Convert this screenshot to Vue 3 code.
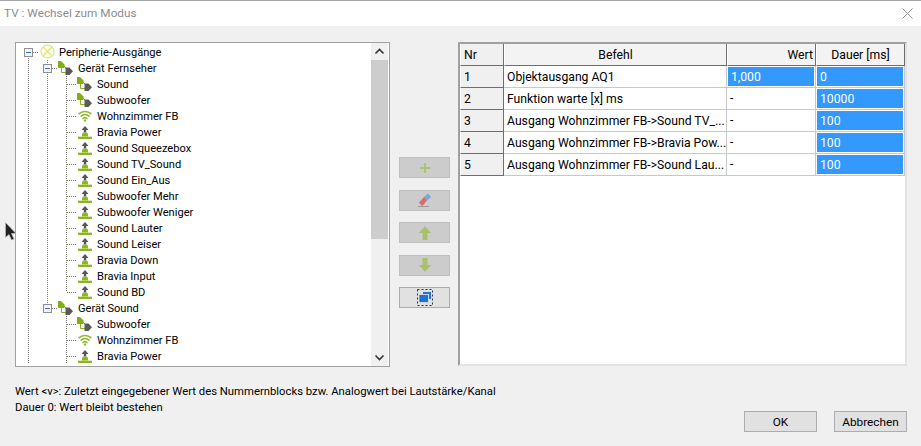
<script setup>
const leaf = (label, kind = 'up', last = false) => ({ label, kind, level: 2, last })
const rows = [
  { label: 'Peripherie-Ausgänge', kind: 'lamp', level: 0 },
  { label: 'Gerät Fernseher', kind: 'device', level: 1 },
  leaf('Sound', 'device'),
  leaf('Subwoofer', 'device'),
  leaf('Wohnzimmer FB', 'wifi'),
  leaf('Bravia Power'),
  leaf('Sound Squeezebox'),
  leaf('Sound TV_Sound'),
  leaf('Sound Ein_Aus'),
  leaf('Subwoofer Mehr'),
  leaf('Subwoofer Weniger'),
  leaf('Sound Lauter'),
  leaf('Sound Leiser'),
  leaf('Bravia Down'),
  leaf('Bravia Input'),
  leaf('Sound BD', 'up', true),
  { label: 'Gerät Sound', kind: 'device', level: 1, lastGroup: true },
  leaf('Subwoofer', 'device'),
  leaf('Wohnzimmer FB', 'wifi'),
  leaf('Bravia Power')
]
const commands = [
  { nr: 1, name: 'Objektausgang AQ1', value: '1,000', selected: true, time: '0' },
  { nr: 2, name: 'Funktion warte [x] ms', value: '-', time: '10000' },
  { nr: 3, name: 'Ausgang Wohnzimmer FB->Sound TV_...', value: '-', time: '100' },
  { nr: 4, name: 'Ausgang Wohnzimmer FB->Bravia Pow...', value: '-', time: '100' },
  { nr: 5, name: 'Ausgang Wohnzimmer FB->Sound Lau...', value: '-', time: '100' }
]
</script>

<template>
  <div class="dialog">
    <header class="titlebar">
      <span class="title">TV : Wechsel zum Modus</span>
      <svg class="close" width="11" height="11" viewBox="0 0 11 11"><path d="M.5.5l10 10M10.500.5l-10 10" stroke="#8f8f8f" fill="none" /></svg>
    </header>

    <main class="main">
      <section class="tree">
        <div class="tree-list">
          <div v-for="(row, i) in rows" :key="i" class="row">
            <template v-if="row.level === 0">
              <span class="cell cell-root"><i class="toggle"></i></span>
            </template>
            <template v-else-if="row.level === 1">
              <span class="cell cell-v"></span>
              <span class="cell" :class="row.lastGroup ? 'cell-groupend' : 'cell-group'"><i class="toggle"></i></span>
            </template>
            <template v-else>
              <span class="cell cell-v"></span>
              <span class="cell" :class="i > 16 ? '' : 'cell-v'"></span>
              <span class="cell" :class="row.last ? 'cell-ell' : 'cell-tee'"></span>
            </template>

            <svg class="icon" width="17" height="16" viewBox="0 0 17 16">
              <g v-if="row.kind === 'lamp'" fill="none" stroke="#e4e480" stroke-width="1.200">
                <circle cx="8.500" cy="7.500" r="6.500" fill="#fdfdf0" />
                <path d="M4 3l9 9M13 3l-9 9" />
              </g>
              <g v-else-if="row.kind === 'device'">
                <path d="M3.500 7v5.500H8M5 5l3 3" fill="none" stroke="#86b31f" />
                <path d="M0 1h3l3.500 3.500V8H0z" fill="#83ae12" />
                <path d="M7.500 7.500h4L15 11.250 11.500 15h-4z" fill="#5a5a5a" />
              </g>
              <g v-else-if="row.kind === 'wifi'" fill="none" stroke="#8db92b" stroke-width="1.600">
                <path d="M1.500 6Q8 1 14.500 6M3.500 8.500Q8 4.500 12.500 8.500M5.500 10.800Q8 8.800 10.500 10.800" />
                <circle cx="8" cy="12.500" r="1.200" fill="#8db92b" stroke="none" />
              </g>
              <g v-else>
                <path d="M8 2l3.500 4H9.200v2.500H6.800V6H4.500z" fill="#555" />
                <path d="M5 12.500V10.500q0-2 2-2h2q2 0 2 2v2z" fill="#8cb51f" />
                <path d="M1 12.700h14V15H1z" fill="#8cb51f" />
              </g>
            </svg>
            <span class="label">{{ row.label }}</span>
          </div>
        </div>
        <div class="scrollbar">
          <svg width="17" height="17" viewBox="0 0 17 17"><path d="M4.500 10.500l4-4 4 4" fill="none" stroke="#333" stroke-width="1.600" /></svg>
          <div class="thumb-track"><div class="thumb"></div></div>
          <svg width="17" height="17" viewBox="0 0 17 17"><path d="M4.500 6.500l4 4 4-4" fill="none" stroke="#333" stroke-width="1.600" /></svg>
        </div>
      </section>

      <div class="tools">
        <button class="tool" disabled>
          <svg width="12" height="12" viewBox="0 0 12 12"><path d="M5 1h2v4h4v2H7v4H5V7H1V5h4z" fill="#abc46d" /></svg>
        </button>
        <button class="tool" disabled>
          <svg width="16" height="16" viewBox="0 0 16 16">
            <path d="M7 5l4-3.500 3 3.500-4 3.500z" fill="#7aa7dc" />
            <path d="M7 5l3 3.500L6 13.500H4.500L2 10.500z" fill="#d96c6c" />
            <path d="M1 14.500h11" stroke="#9a9a9a" />
          </svg>
        </button>
        <button class="tool" disabled>
          <svg width="14" height="16" viewBox="0 0 14 16"><path d="M7 1l6 7h-3.500v7h-5V8H1z" fill="#a8c26c" /></svg>
        </button>
        <button class="tool" disabled>
          <svg width="14" height="16" viewBox="0 0 14 16"><path d="M7 15l6-7h-3.500V1h-5v7H1z" fill="#a8c26c" /></svg>
        </button>
        <button class="tool tool-on">
          <svg width="16" height="17" viewBox="0 0 16 17">
            <rect x=".5" y=".5" width="15" height="16" fill="none" stroke="#333" stroke-dasharray="2 2" />
            <path d="M6 3h8v7h-2V5H6z" fill="#1f72d6" />
            <path d="M2 5.500h9.500v8H2z" fill="#1f72d6" stroke="#e1e1e1" stroke-width=".8" />
          </svg>
        </button>
      </div>

      <section class="grid">
        <div class="grid-row">
          <div class="head nr">Nr</div>
          <div class="head center">Befehl</div>
          <div class="head right">Wert</div>
          <div class="head center">Dauer [ms]</div>
        </div>
        <div v-for="c in commands" :key="c.nr" class="grid-row">
          <div class="head nr side">{{ c.nr }}</div>
          <div class="data">{{ c.name }}</div>
          <div class="data" :class="{ picked: c.selected }"><b>{{ c.value }}</b></div>
          <div class="data picked"><b>{{ c.time }}</b></div>
        </div>
      </section>
    </main>

    <footer class="footer">
      <div class="note">
        <p>Wert &lt;v&gt;: Zuletzt eingegebener Wert des Nummernblocks bzw. Analogwert bei Lautstärke/Kanal</p>
        <p>Dauer 0: Wert bleibt bestehen</p>
      </div>
      <div class="actions">
        <button class="action">OK</button>
        <button class="action">Abbrechen</button>
      </div>
    </footer>

    <svg class="pointer" width="11" height="19" viewBox="0 0 11 19">
      <path d="M.5.5v15l3.500-3 2.500 5.500 2.500-1-2.500-5.500h4.500z" fill="#222" stroke="#bbb" stroke-width=".7" />
    </svg>
  </div>
</template>

<style>
html, body { margin: 0; }
</style>

<style scoped>
.dialog {
  position: relative;
  width: 921px;
  height: 446px;
  overflow: hidden;
  display: flex;
  flex-direction: column;
  background: #f0f0f0;
  color: #000;
  font: 11.300px/16px Roboto, "Open Sans", sans-serif;
}
.titlebar {
  flex: none;
  box-sizing: border-box;
  height: 26px;
  border-top: 1px solid #a6a6a6;
  background: #fff;
  display: flex;
  align-items: center;
  justify-content: space-between;
  padding: 0 8px 2px 4px;
}
.title { color: #8c8c8c; font-size: 11.800px; }
.close { margin-top: 2px; }
.main {
  flex: none;
  display: flex;
  align-items: flex-start;
  padding: 16px 0 0 15px;
}
.tree {
  flex: none;
  box-sizing: border-box;
  width: 375px;
  height: 325px;
  border: 1px solid #a0a0a0;
  background: #fff;
  display: flex;
  overflow: hidden;
  font-size: 11.100px;
}
.tree-list { flex: 1; padding: 1px 0 0 3px; min-width: 0; }
.row { display: flex; height: 16px; align-items: center; white-space: nowrap; }
.cell { position: relative; flex: none; align-self: stretch; width: 19px; }
.cell-v::before,
.cell-tee::before,
.cell-ell::before,
.cell-root::before,
.cell-group::before,
.cell-groupend::before {
  content: "";
  position: absolute;
  left: 9px;
  top: 0;
  bottom: 0;
  width: 1px;
  background: repeating-linear-gradient(to bottom, #777 0 1px, transparent 1px 2px);
}
.cell-root::before { top: 8px; }
.cell-ell::before, .cell-groupend::before { bottom: 8px; }
.cell-tee::after,
.cell-ell::after,
.cell-root::after,
.cell-group::after,
.cell-groupend::after {
  content: "";
  position: absolute;
  left: 10px;
  width: 10px;
  top: 8px;
  height: 1px;
  background: repeating-linear-gradient(to right, #777 0 1px, transparent 1px 2px);
}
.toggle {
  position: absolute;
  z-index: 1;
  left: 5px;
  top: 4px;
  box-sizing: border-box;
  width: 9px;
  height: 9px;
  border: 1px solid #8f8f8f;
  background: linear-gradient(#3c6cb4, #3c6cb4) center / 5px 1px no-repeat, #f2f2f2;
}
.icon { flex: none; margin: 0 3px 0 1px; }
.label { display: block; padding-top: 2px; }
.scrollbar {
  flex: none;
  width: 17px;
  margin-right: 1px;
  background: #f0f0f0;
  display: flex;
  flex-direction: column;
}
.scrollbar svg { flex: none; }
.thumb-track { flex: 1; }
.thumb { height: 179px; background: #cdcdcd; }
.tools {
  flex: none;
  width: 51px;
  margin: 115px 8px 0 9px;
  display: flex;
  flex-direction: column;
  gap: 11.500px;
}
.tool {
  box-sizing: border-box;
  height: 21px;
  padding: 0;
  border: 1px solid #bfbfbf;
  background: #ccc;
  display: flex;
  align-items: center;
  justify-content: center;
}
.tool-on { background: #e1e1e1; border-color: #adadad; }
.grid {
  flex: none;
  box-sizing: border-box;
  width: 449px;
  height: 324px;
  border: 2px solid #e3e3e3;
  border-top-color: #a0a0a0;
  border-left-color: #a0a0a0;
  background: #fff;
  font-size: 12.200px;
}
.grid-row {
  display: grid;
  grid-template-columns: 44px 223px 89px 89px;
  grid-template-rows: 22px;
  height: 22px;
}
.head, .data {
  box-sizing: border-box;
  line-height: 23px;
  border-right: 1px solid #c8c8c8;
  border-bottom: 1px solid #c8c8c8;
  padding: 0 3px;
  white-space: nowrap;
  min-width: 0;
}
.head { background: #f3f3f3; border-color: #6e6e6e; border-left: 1px solid #fff; }
.nr { background: #f0f0f0; }
.side { border-right-color: #6e6e6e; }
.center { text-align: center; }
.right { text-align: right; padding-right: 2px; }
.data b { display: block; font-weight: 400; padding-left: 2px; margin: 0 -2px; height: 19px; line-height: 21px; }
.picked { padding: 1px; }
.picked b { margin: 0; background: #3399ff; color: #fff; padding-left: 3px; }
.footer {
  flex: 1;
  display: flex;
  justify-content: space-between;
  align-items: flex-end;
  padding: 16px 14px 14px 15px;
}
.note { align-self: flex-start; margin-top: 1px; }
.note p { margin: 0; }
.actions { display: flex; gap: 17px; }
.action {
  box-sizing: border-box;
  width: 73px;
  height: 21px;
  padding: 0;
  border: 1px solid #adadad;
  background: #e1e1e1;
  font: inherit;
  font-size: 11.800px;
  color: #000;
}
.pointer { position: absolute; left: 5px; top: 222px; }
</style>
